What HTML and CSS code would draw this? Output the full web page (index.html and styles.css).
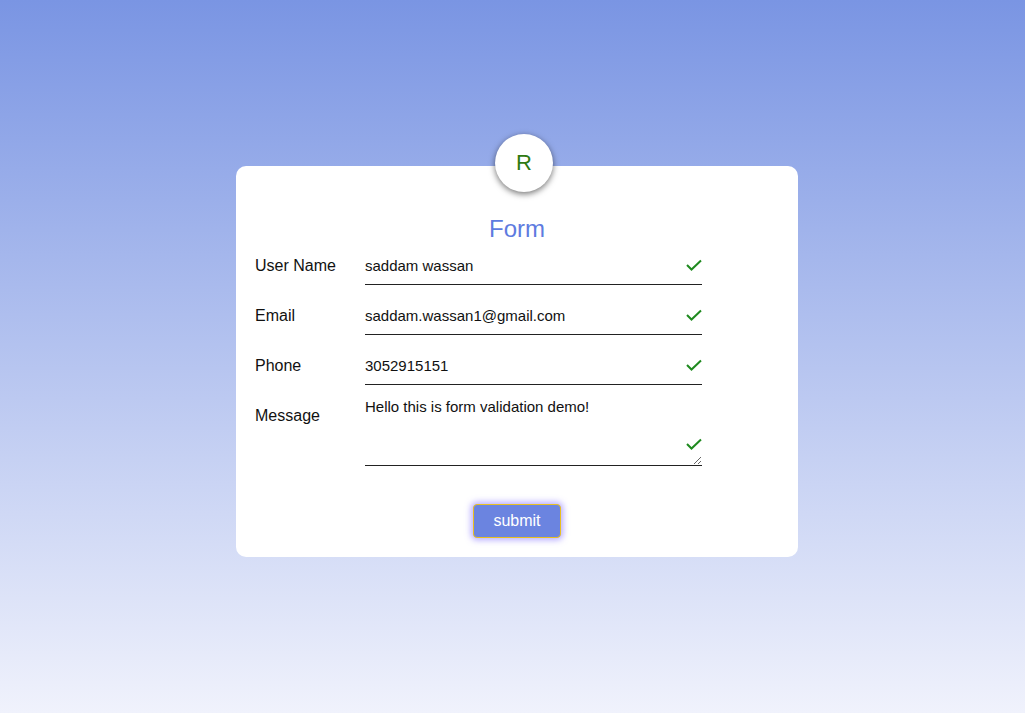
FILE: index.html
```html
<!DOCTYPE html>
<html>
<head>
<meta charset="utf-8">
<link rel="stylesheet" href="styles.css">
</head>
<body>
<div class="card">
  <div class="avatar">R</div>
  <h1 class="title">Form</h1>
  <form class="form">
    <div class="row">
      <label class="label">User Name</label>
      <div class="field">
        <input class="input" type="text" value="saddam wassan">
        <svg class="check" width="16" height="12" viewBox="0 0 16 12"><path d="M1 6 L5.5 10.5 L15 1.5" fill="none" stroke="#1f8a1f" stroke-width="2"/></svg>
      </div>
    </div>
    <div class="row">
      <label class="label">Email</label>
      <div class="field">
        <input class="input" type="text" value="saddam.wassan1@gmail.com">
        <svg class="check" width="16" height="12" viewBox="0 0 16 12"><path d="M1 6 L5.5 10.5 L15 1.5" fill="none" stroke="#1f8a1f" stroke-width="2"/></svg>
      </div>
    </div>
    <div class="row">
      <label class="label">Phone</label>
      <div class="field">
        <input class="input" type="text" value="3052915151">
        <svg class="check" width="16" height="12" viewBox="0 0 16 12"><path d="M1 6 L5.5 10.5 L15 1.5" fill="none" stroke="#1f8a1f" stroke-width="2"/></svg>
      </div>
    </div>
    <div class="row">
      <label class="label">Message</label>
      <div class="field">
        <textarea class="textarea">Hello this is form validation demo!</textarea>
        <svg class="check check-area" width="16" height="12" viewBox="0 0 16 12"><path d="M1 6 L5.5 10.5 L15 1.5" fill="none" stroke="#1f8a1f" stroke-width="2"/></svg>
      </div>
    </div>
    <div class="actions">
      <button class="submit" type="button">submit</button>
    </div>
  </form>
</div>
</body>
</html>
```

FILE: styles.css
```css
html, body {
  margin: 0;
  height: 100%;
}
body {
  background: linear-gradient(to bottom, #7a95e3 0%, #f0f2fc 100%);
  font-family: "Liberation Sans", Arial, sans-serif;
  overflow: hidden;
}
.card {
  position: relative;
  box-sizing: border-box;
  width: 562px;
  height: 391px;
  margin: 166px 0 0 236px;
  background: #fff;
  border-radius: 10px;
  padding: 48px 19px 20px 19px;
}
.avatar {
  position: absolute;
  left: 259px;
  top: -32px;
  width: 58px;
  height: 58px;
  box-sizing: border-box;
  border-radius: 50%;
  background: #fff;
  box-shadow: 0 2px 6px rgba(0,0,0,0.55);
  display: flex;
  align-items: center;
  justify-content: center;
  font-family: "Liberation Sans", Arial, sans-serif;
  font-weight: normal;
  font-size: 22px;
  color: #2f7a12;
}
.title {
  margin: 0 0 5px 0;
  text-align: center;
  font-size: 24px;
  line-height: 30px;
  font-weight: normal;
  color: #5e7be0;
}
.form {
  display: flex;
  flex-direction: column;
  gap: 14px;
}
.row {
  display: grid;
  grid-template-columns: 110px 337px;
  align-items: start;
}
.label {
  font-size: 16px;
  line-height: 34px;
  color: #111;
}
.field {
  position: relative;
  width: 337px;
}
.input {
  display: block;
  box-sizing: border-box;
  width: 337px;
  height: 36px;
  border: none;
  border-bottom: 1px solid #222;
  padding: 0 24px 2px 0;
  font-family: "Liberation Sans", Arial, sans-serif;
  font-size: 15px;
  color: #111;
  outline: none;
  background: transparent;
}
.textarea {
  display: block;
  box-sizing: border-box;
  width: 337px;
  height: 67px;
  border: none;
  border-bottom: 1px solid #222;
  padding: 0 24px 0 0;
  margin-top: 0;
  font-family: "Liberation Sans", Arial, sans-serif;
  font-size: 15px;
  line-height: 15px;
  color: #111;
  outline: none;
  resize: vertical;
  background: transparent;
}
.check {
  position: absolute;
  right: 0;
  top: 10px;
}
.check-area {
  top: 39px;
}
.actions {
  display: flex;
  justify-content: center;
  margin-top: 24px;
}
.submit {
  box-sizing: border-box;
  width: 88px;
  height: 34px;
  border: 1px solid #e8c020;
  border-radius: 4px;
  background: #6b84e0;
  color: #fff;
  font-family: "Liberation Sans", Arial, sans-serif;
  font-size: 16px;
  box-shadow: 0 0 6px 2px rgba(120, 100, 255, 0.55);
  cursor: pointer;
}
```
